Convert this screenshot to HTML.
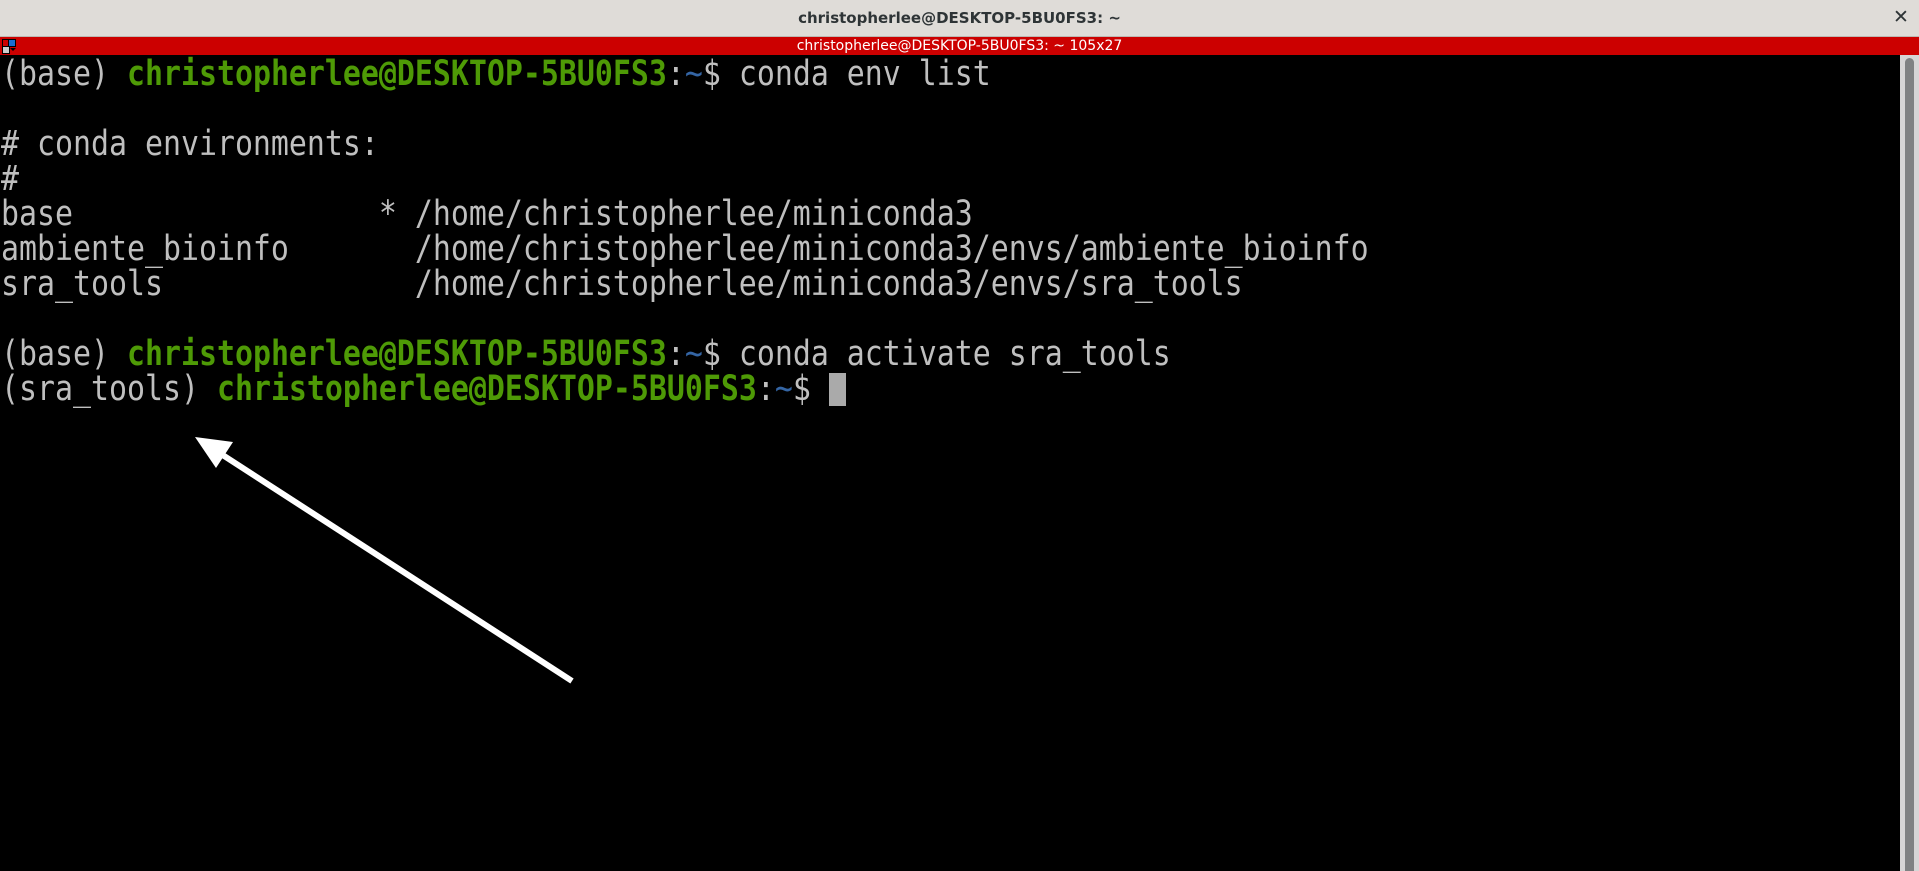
<!DOCTYPE html>
<html><head><meta charset="utf-8"><style>
html,body{margin:0;padding:0;width:1919px;height:871px;overflow:hidden;background:#000;}
#title{position:absolute;left:0;top:0;width:1919px;height:36px;background:#dfdcd8;border-bottom:1px solid #bdb8b2;}
#title .t{position:absolute;left:0;width:1919px;top:9px;text-align:center;font:bold 15px "DejaVu Sans","Liberation Sans",sans-serif;color:#2e3436;}
#title .x{position:absolute;left:1893px;top:6px;font:bold 19px "DejaVu Sans",sans-serif;color:#2e3436;}
#bar{position:absolute;left:0;top:37px;width:1919px;height:18px;background:#cc0000;}
#bar .t{position:absolute;left:0;width:1919px;top:1px;text-align:center;font:14px "DejaVu Sans","Liberation Sans",sans-serif;color:#fff;}
#term{position:absolute;left:0;top:55px;width:1900px;height:816px;background:#000;}
.l{position:absolute;left:1px;height:35px;white-space:pre;font-family:"DejaVu Sans Mono","Liberation Mono",monospace;font-size:35px;line-height:35px;color:#bfbfbf;transform:scaleX(0.854);transform-origin:0 0;}
.g{color:#4e9a06;font-weight:bold;}
.b{color:#3465a4;}
#cur{position:absolute;left:829px;top:373px;width:17px;height:33px;background:#aaaaaa;}
#sb{position:absolute;left:1900px;top:55px;width:19px;height:816px;background:#d6d6d6;}
#sb div{position:absolute;left:5px;top:3px;width:9px;height:813px;background:#7f8283;border-radius:5px 5px 0 0;}
</style></head><body>
<div id="title"><div class="t">christopherlee@DESKTOP-5BU0FS3: ~</div><div class="x">✕</div></div>
<div id="bar">
<div style="position:absolute;left:2px;top:2px;width:6px;height:6px;background:#c00;border:1px solid #000"></div>
<div style="position:absolute;left:8px;top:2px;width:6px;height:6px;background:#1a6fd0;border:1px solid #000"></div>
<div style="position:absolute;left:2px;top:9px;width:6px;height:6px;background:#ccc;border:1px solid #000"></div>
<div style="position:absolute;left:10px;top:11px;width:0;height:0;border-left:3px solid transparent;border-right:3px solid transparent;border-top:3px solid #000"></div>
<div class="t">christopherlee@DESKTOP-5BU0FS3: ~ 105x27</div></div>
<div id="term"></div>
<div class="l" style="top:57px">(base) <span class="g">christopherlee@DESKTOP-5BU0FS3</span>:<span class="b">~</span>$ conda env list</div>
<div class="l" style="top:127px"># conda environments:</div>
<div class="l" style="top:162px">#</div>
<div class="l" style="top:197px">base                 * /home/christopherlee/miniconda3</div>
<div class="l" style="top:232px">ambiente_bioinfo       /home/christopherlee/miniconda3/envs/ambiente_bioinfo</div>
<div class="l" style="top:267px">sra_tools              /home/christopherlee/miniconda3/envs/sra_tools</div>
<div class="l" style="top:337px">(base) <span class="g">christopherlee@DESKTOP-5BU0FS3</span>:<span class="b">~</span>$ conda activate sra_tools</div>
<div class="l" style="top:372px">(sra_tools) <span class="g">christopherlee@DESKTOP-5BU0FS3</span>:<span class="b">~</span>$ </div>
<div id="cur"></div>
<div id="sb"><div></div></div>
<svg style="position:absolute;left:0;top:0" width="1919" height="871">
<line x1="572" y1="681" x2="218" y2="452" stroke="#fff" stroke-width="6"/>
<polygon points="195,437 233,442 216,468" fill="#fff"/>
</svg>
</body></html>
